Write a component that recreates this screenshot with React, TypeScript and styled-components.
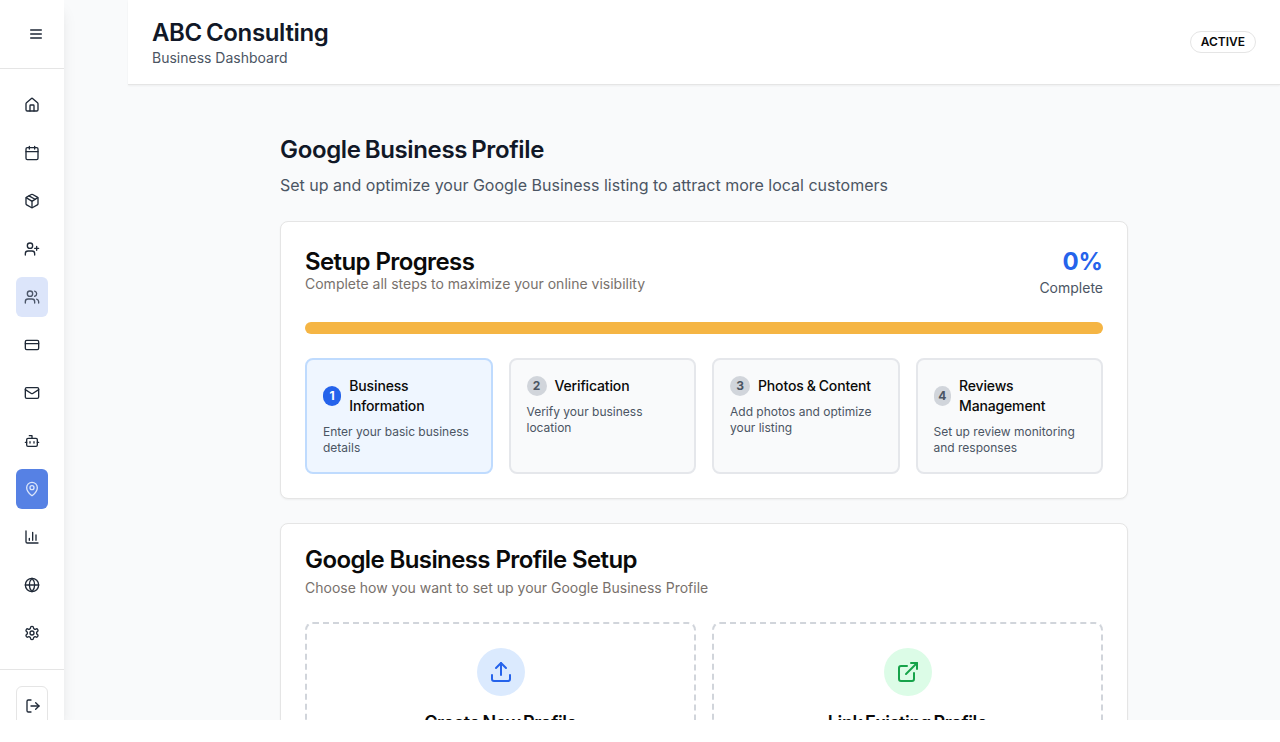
import React from "react";
import styled, { createGlobalStyle, css } from "styled-components";

const GlobalStyle = createGlobalStyle`
  *, *::before, *::after { box-sizing: border-box; }
  body {
    margin: 0;
    background: #fff;
    color: #0a0a0a;
    font-family: Inter, "Liberation Sans", sans-serif;
    font-size: 16px;
    line-height: 24px;
  }
  h1, h2, h3, h4, p { margin: 0; }
  button { font: inherit; }
`;

const Shell = styled.div`
  display: flex;
  gap: 64px;
  height: 720px;
  overflow: hidden;
  background: #f9fafb;
`;

const Sidebar = styled.aside`
  flex: none;
  display: flex;
  flex-direction: column;
  width: 64px;
  height: 720px;
  background: #fff;
  box-shadow: 0 10px 15px -3px rgba(0, 0, 0, 0.1), 0 4px 6px -4px rgba(0, 0, 0, 0.1);
`;

const SidebarTop = styled.div`
  flex: none;
  height: 69px;
  padding: 16px 16px 16px 20px;
  border-bottom: 1px solid #e5e5e5;
`;

const iconButton = css`
  display: flex;
  align-items: center;
  justify-content: center;
  width: 32px;
  padding: 0;
  border: 0;
  border-radius: 6px;
  color: #1f2937;
  background: transparent;
`;

const MenuButton = styled.button`
  ${iconButton}
  height: 36px;
`;

const Nav = styled.nav`
  flex: none;
  display: flex;
  flex-direction: column;
  gap: 8px;
  padding: 16px;
`;

type NavTone = "plain" | "soft" | "solid";

const NavItem = styled.button<{ $tone: NavTone }>`
  ${iconButton}
  height: 40px;
  ${({ $tone }) => $tone === "soft" && css`background: #dce5fa; color: #4b5568;`}
  ${({ $tone }) => $tone === "solid" && css`background: #5681e4; color: #dbe5fa;`}
`;

const SidebarFoot = styled.div`
  flex: none;
  padding: 16px;
  border-top: 1px solid #e5e5e5;
`;

const LogoutButton = styled.button`
  ${iconButton}
  height: 40px;
  padding-left: 2px;
  border: 1px solid #e5e5e5;
`;

const Page = styled.div`
  flex: 1;
  min-width: 0;
`;

const Header = styled.header`
  display: flex;
  align-items: center;
  justify-content: space-between;
  padding: 16px 24px;
  border-bottom: 1px solid #e5e5e5;
  background: #fff;
  box-shadow: 0 1px 2px rgba(0, 0, 0, 0.05);
`;

const display = css`
  margin-bottom: -2px;
  font-weight: 600;
  font-size: 24px;
  line-height: 34px;
  letter-spacing: -0.35px;
  word-spacing: -1.6px;
  color: #111827;
`;

const BusinessName = styled.h1`
  ${display}
`;

const SmallText = styled.p`
  font-size: 14px;
  line-height: 20px;
  color: #4b5563;
`;

const Badge = styled.span`
  padding: 2px 10px;
  border: 1px solid #e5e5e5;
  border-radius: 999px;
  font-weight: 600;
  font-size: 12px;
  line-height: 16px;
`;

const Main = styled.main`
  display: flex;
  flex-direction: column;
  gap: 24px;
  width: 848px;
  margin: 0 auto;
  padding-top: 48px;
`;

const Intro = styled.section`
  display: flex;
  flex-direction: column;
  gap: 8px;
`;

const PageTitle = styled.h2`
  ${display}
`;

const Lead = styled.p`
  color: #4b5563;
`;

const Card = styled.section`
  display: flex;
  flex-direction: column;
  gap: 24px;
  padding: 24px;
  border: 1px solid #e5e5e5;
  border-radius: 8px;
  background: #fff;
  box-shadow: 0 1px 2px rgba(0, 0, 0, 0.05);
`;

const CardHead = styled.div`
  display: flex;
  align-items: center;
  justify-content: space-between;
`;

const CardHeading = styled.div<{ $gap: number }>`
  display: flex;
  flex-direction: column;
  gap: ${({ $gap }) => $gap}px;
`;

const CardTitle = styled.h3`
  font-weight: 600;
  font-size: 24px;
  line-height: 24px;
  letter-spacing: -0.6px;
`;

const CardNote = styled.p`
  font-size: 14px;
  line-height: 20px;
  color: #78716c;
`;

const Score = styled.div`
  text-align: right;
`;

const Percent = styled.div`
  font-weight: 700;
  font-size: 24px;
  line-height: 32px;
  color: #2563eb;
`;

const Progress = styled.div`
  height: 12px;
  border-radius: 6px;
  background: #f5b544;
`;

const Steps = styled.div`
  display: grid;
  grid-template-columns: repeat(4, 1fr);
  gap: 16px;
`;

const Step = styled.div<{ $active: boolean }>`
  display: flex;
  flex-direction: column;
  gap: 8px;
  padding: 16px;
  border: 2px solid ${({ $active }) => ($active ? "#bfdbfe" : "#e5e7eb")};
  border-radius: 8px;
  background: ${({ $active }) => ($active ? "#eff6ff" : "#f9fafb")};
`;

const StepHead = styled.div`
  display: flex;
  align-items: center;
  gap: 8px;
`;

const StepNumber = styled.span<{ $active: boolean; $width: number }>`
  flex: none;
  width: ${({ $width }) => $width}px;
  height: 20px;
  border-radius: 999px;
  background: ${({ $active }) => ($active ? "#2563eb" : "#d1d5db")};
  color: ${({ $active }) => ($active ? "#fff" : "#4b5563")};
  font-weight: 700;
  font-size: 12px;
  line-height: 20px;
  text-align: center;
`;

const StepTitle = styled.h4`
  font-weight: 500;
  font-size: 14px;
  line-height: 20px;
  letter-spacing: -0.15px;
  word-spacing: -0.5px;
`;

const StepNote = styled.p`
  font-size: 12px;
  line-height: 16px;
  color: #4b5563;
`;

const Options = styled.div`
  display: grid;
  grid-template-columns: 1fr 1fr;
  gap: 16px;
`;

const Option = styled.div`
  display: flex;
  flex-direction: column;
  align-items: center;
  gap: 12px;
  height: 200px;
  padding: 24px;
  border: 2px dashed #d1d5db;
  border-radius: 8px;
`;

const OptionIcon = styled.div<{ $tint: string; $ink: string }>`
  display: flex;
  align-items: center;
  justify-content: center;
  width: 48px;
  height: 48px;
  border-radius: 50%;
  background: ${({ $tint }) => $tint};
  color: ${({ $ink }) => $ink};
`;

const OptionTitle = styled.h4`
  font-weight: 600;
  font-size: 18px;
  line-height: 30px;
  letter-spacing: -0.4px;
  word-spacing: -1.5px;
`;

const Svg = styled.svg`
  flex: none;
  display: block;
  fill: none;
  stroke: currentColor;
  stroke-width: 2;
  stroke-linecap: round;
  stroke-linejoin: round;
`;

function Icon({ size = 16, children }: { size?: number; children: React.ReactNode }) {
  return (
    <Svg width={size} height={size} viewBox="0 0 24 24" aria-hidden>
      {children}
    </Svg>
  );
}

const navItems: { name: string; tone?: NavTone; art: React.ReactNode }[] = [
  {
    name: "Home",
    art: (
      <>
        <path d="M15 21v-8a1 1 0 0 0-1-1h-4a1 1 0 0 0-1 1v8" />
        <path d="M3 10a2 2 0 0 1 .709-1.528l7-5.999a2 2 0 0 1 2.582 0l7 5.999A2 2 0 0 1 21 10v9a2 2 0 0 1-2 2H5a2 2 0 0 1-2-2z" />
      </>
    ),
  },
  {
    name: "Calendar",
    art: (
      <>
        <path d="M8 2v4M16 2v4M3 10h18" />
        <rect width="18" height="18" x="3" y="4" rx="2" />
      </>
    ),
  },
  {
    name: "Products",
    art: (
      <>
        <path d="M11 21.73a2 2 0 0 0 2 0l7-4A2 2 0 0 0 21 16V8a2 2 0 0 0-1-1.73l-7-4a2 2 0 0 0-2 0l-7 4A2 2 0 0 0 3 8v8a2 2 0 0 0 1 1.73z" />
        <path d="M12 22V12" />
        <path d="m3.3 7 7.703 4.734a2 2 0 0 0 1.994 0L20.7 7" />
        <path d="m7.5 4.27 9 5.15" />
      </>
    ),
  },
  {
    name: "Leads",
    art: (
      <>
        <path d="M16 21v-2a4 4 0 0 0-4-4H6a4 4 0 0 0-4 4v2" />
        <circle cx="9" cy="7" r="4" />
        <path d="M19 8v6M22 11h-6" />
      </>
    ),
  },
  {
    name: "Customers",
    tone: "soft",
    art: (
      <>
        <path d="M16 21v-2a4 4 0 0 0-4-4H6a4 4 0 0 0-4 4v2" />
        <circle cx="9" cy="7" r="4" />
        <path d="M22 21v-2a4 4 0 0 0-3-3.87" />
        <path d="M16 3.13a4 4 0 0 1 0 7.75" />
      </>
    ),
  },
  {
    name: "Payments",
    art: (
      <>
        <rect width="20" height="14" x="2" y="5" rx="2" />
        <path d="M2 10h20" />
      </>
    ),
  },
  {
    name: "Mail",
    art: (
      <>
        <rect width="20" height="16" x="2" y="4" rx="2" />
        <path d="m22 7-8.97 5.7a1.94 1.94 0 0 1-2.06 0L2 7" />
      </>
    ),
  },
  {
    name: "Assistant",
    art: (
      <>
        <path d="M12 8V4H8" />
        <rect width="16" height="12" x="4" y="8" rx="2" />
        <path d="M2 14h2M20 14h2M15 13v2M9 13v2" />
      </>
    ),
  },
  {
    name: "Business profile",
    tone: "solid",
    art: (
      <>
        <path d="M20 10c0 4.993-5.539 10.193-7.399 11.799a1 1 0 0 1-1.202 0C9.539 20.193 4 14.993 4 10a8 8 0 0 1 16 0" />
        <circle cx="12" cy="10" r="3" />
      </>
    ),
  },
  {
    name: "Analytics",
    art: (
      <>
        <path d="M3 3v16a2 2 0 0 0 2 2h16" />
        <path d="M18 17V9M13 17V5M8 17v-3" />
      </>
    ),
  },
  {
    name: "Website",
    art: (
      <>
        <circle cx="12" cy="12" r="10" />
        <path d="M12 2a14.5 14.5 0 0 0 0 20 14.5 14.5 0 0 0 0-20" />
        <path d="M2 12h20" />
      </>
    ),
  },
  {
    name: "Settings",
    art: (
      <>
        <path d="M12.22 2h-.44a2 2 0 0 0-2 2v.18a2 2 0 0 1-1 1.73l-.43.25a2 2 0 0 1-2 0l-.15-.08a2 2 0 0 0-2.73.73l-.22.38a2 2 0 0 0 .73 2.73l.15.1a2 2 0 0 1 1 1.72v.51a2 2 0 0 1-1 1.74l-.15.09a2 2 0 0 0-.73 2.73l.22.38a2 2 0 0 0 2.73.73l.15-.08a2 2 0 0 1 2 0l.43.25a2 2 0 0 1 1 1.73V20a2 2 0 0 0 2 2h.44a2 2 0 0 0 2-2v-.18a2 2 0 0 1 1-1.73l.43-.25a2 2 0 0 1 2 0l.15.08a2 2 0 0 0 2.73-.73l.22-.39a2 2 0 0 0-.73-2.73l-.15-.08a2 2 0 0 1-1-1.74v-.5a2 2 0 0 1 1-1.74l.15-.09a2 2 0 0 0 .73-2.73l-.22-.38a2 2 0 0 0-2.73-.73l-.15.08a2 2 0 0 1-2 0l-.43-.25a2 2 0 0 1-1-1.73V4a2 2 0 0 0-2-2z" />
        <circle cx="12" cy="12" r="3" />
      </>
    ),
  },
];

const steps = [
  { title: ["Business", "Information"], note: "Enter your basic business details", width: 18.3 },
  { title: ["Verification"], note: "Verify your business location", width: 20 },
  { title: ["Photos & Content"], note: "Add photos and optimize your listing", width: 20 },
  { title: ["Reviews", "Management"], note: "Set up review monitoring and responses", width: 17.5 },
];

export default function App() {
  return (
    <>
      <GlobalStyle />
      <Shell>
        <Sidebar>
          <SidebarTop>
            <MenuButton aria-label="Menu">
              <Icon>
                <path d="M4 6h16M4 12h16M4 18h16" />
              </Icon>
            </MenuButton>
          </SidebarTop>
          <Nav>
            {navItems.map(({ name, tone = "plain", art }) => (
              <NavItem key={name} $tone={tone} aria-label={name}>
                <Icon>{art}</Icon>
              </NavItem>
            ))}
          </Nav>
          <SidebarFoot>
            <LogoutButton aria-label="Log out">
              <Icon>
                <path d="M9 21H5a2 2 0 0 1-2-2V5a2 2 0 0 1 2-2h4" />
                <path d="m16 17 5-5-5-5" />
                <path d="M21 12H9" />
              </Icon>
            </LogoutButton>
          </SidebarFoot>
        </Sidebar>

        <Page>
          <Header>
            <div>
              <BusinessName>ABC Consulting</BusinessName>
              <SmallText>Business Dashboard</SmallText>
            </div>
            <Badge>ACTIVE</Badge>
          </Header>

          <Main>
            <Intro>
              <PageTitle>Google Business Profile</PageTitle>
              <Lead>Set up and optimize your Google Business listing to attract more local customers</Lead>
            </Intro>

            <Card>
              <CardHead>
                <CardHeading $gap={0}>
                  <CardTitle>Setup Progress</CardTitle>
                  <CardNote>Complete all steps to maximize your online visibility</CardNote>
                </CardHeading>
                <Score>
                  <Percent>0%</Percent>
                  <SmallText>Complete</SmallText>
                </Score>
              </CardHead>
              <Progress />
              <Steps>
                {steps.map(({ title, note, width }, i) => (
                  <Step key={note} $active={i === 0}>
                    <StepHead>
                      <StepNumber $active={i === 0} $width={width}>
                        {i + 1}
                      </StepNumber>
                      <StepTitle>
                        {title.map((line) => (
                          <div key={line}>{line}</div>
                        ))}
                      </StepTitle>
                    </StepHead>
                    <StepNote>{note}</StepNote>
                  </Step>
                ))}
              </Steps>
            </Card>

            <Card>
              <CardHeading $gap={6}>
                <CardTitle>Google Business Profile Setup</CardTitle>
                <CardNote>Choose how you want to set up your Google Business Profile</CardNote>
              </CardHeading>
              <Options>
                <Option>
                  <OptionIcon $tint="#dbeafe" $ink="#2563eb">
                    <Icon size={24}>
                      <path d="M21 15v4a2 2 0 0 1-2 2H5a2 2 0 0 1-2-2v-4" />
                      <path d="m17 8-5-5-5 5" />
                      <path d="M12 3v12" />
                    </Icon>
                  </OptionIcon>
                  <OptionTitle>Create New Profile</OptionTitle>
                </Option>
                <Option>
                  <OptionIcon $tint="#dcfce7" $ink="#16a34a">
                    <Icon size={24}>
                      <path d="M15 3h6v6" />
                      <path d="M10 14 21 3" />
                      <path d="M18 13v6a2 2 0 0 1-2 2H5a2 2 0 0 1-2-2V8a2 2 0 0 1 2-2h6" />
                    </Icon>
                  </OptionIcon>
                  <OptionTitle>Link Existing Profile</OptionTitle>
                </Option>
              </Options>
            </Card>
          </Main>
        </Page>
      </Shell>
    </>
  );
}
